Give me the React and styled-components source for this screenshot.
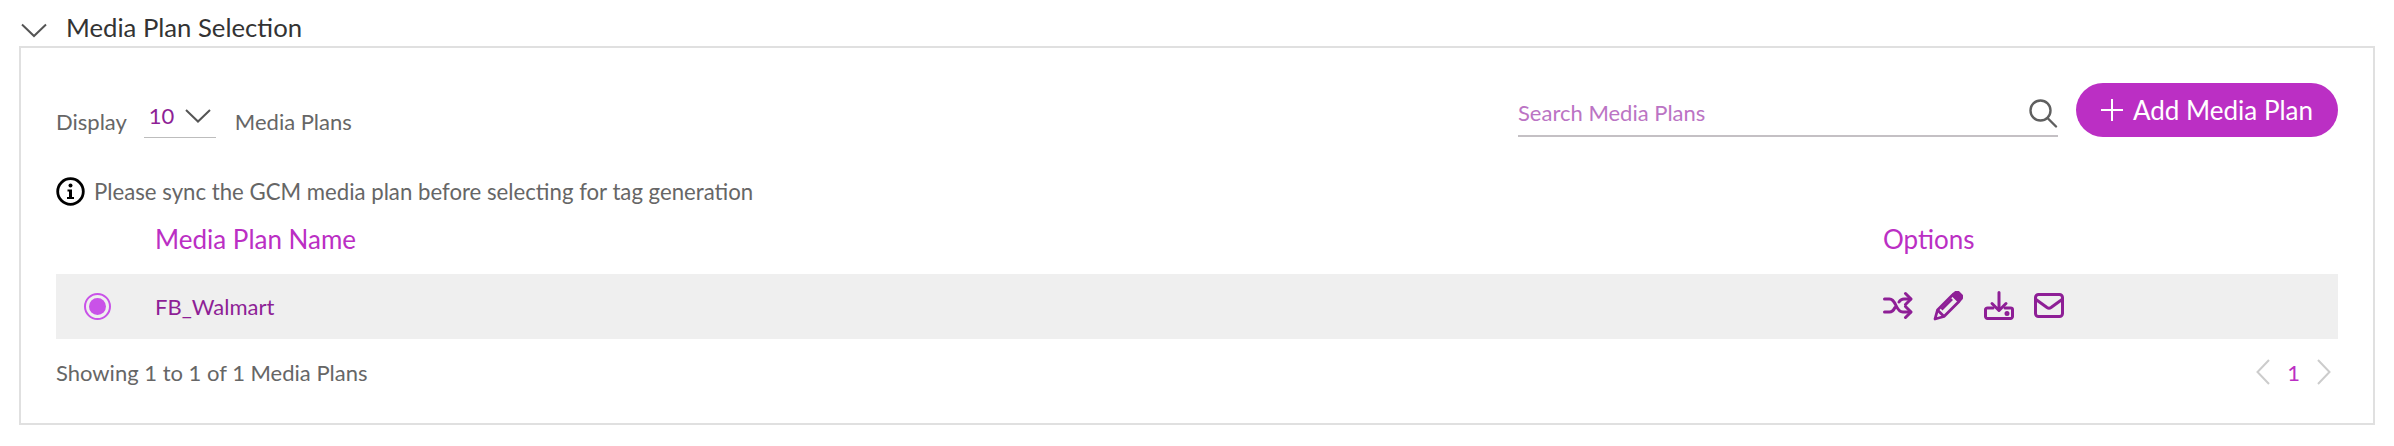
import React from "react";
import styled, { createGlobalStyle } from "styled-components";

const Global = createGlobalStyle`
  html, body { margin: 0; padding: 0; background: #fff; }
  body { font-family: "Lato", "Liberation Sans", sans-serif; color: #666; }
`;
const Page = styled.div`
  width: 2394px;
  height: 446px;
  padding: 10px 19px 0 19px;
  box-sizing: border-box;
  overflow: hidden;
`;
const SectionHeader = styled.div`
  display: flex;
  align-items: center;
  height: 36px;
  padding-bottom: 2px;
  box-sizing: border-box;
`;
const SectionChevron = styled.svg`
  width: 26px;
  height: 15px;
  margin: 6px 19px 0 2px;
`;
const SectionTitle = styled.h2`
  margin: 0;
  font-size: 25.700px;
  font-weight: 400;
  color: #333;
`;
const Panel = styled.section`
  height: 379px;
  box-sizing: border-box;
  border: 2px solid #e0e0e0;
  padding: 35px 35px 0;
`;
const Toolbar = styled.div`
  display: flex;
  align-items: flex-start;
  justify-content: space-between;
  height: 93px;
`;
const DisplayGroup = styled.div`
  display: flex;
  align-items: center;
  font-size: 22px;
  padding-top: 20px;
`;
const DisplayLabel = styled.span`
  line-height: 28px;
  padding-top: 3px;
`;
const Select = styled.div`
  display: flex;
  align-items: center;
  justify-content: space-between;
  box-sizing: border-box;
  width: 72px;
  height: 38px;
  margin: -3px 19px 0 17px;
  padding: 0 5px 6px;
  border-bottom: 1px solid #bdbdbd;
  color: #8e1f96;
  font-size: 22px;
`;
const SelectChevron = styled.svg`
  width: 26px;
  height: 14px;
`;
const ToolbarRight = styled.div`
  display: flex;
  align-items: flex-start;
  gap: 18px;
`;
const Search = styled.div`
  display: flex;
  align-items: center;
  justify-content: space-between;
  box-sizing: border-box;
  width: 540px;
  height: 54px;
  border-bottom: 2px solid #c4c0c4;
  color: #bb74c4;
  font-size: 22px;
  padding-top: 6px;
`;
const SearchIcon = styled.svg`
  width: 30px;
  height: 30px;
  margin-top: 2px;
`;
const AddButton = styled.button`
  display: flex;
  align-items: center;
  justify-content: center;
  gap: 10px;
  width: 262px;
  height: 54px;
  border: 0;
  border-radius: 27px;
  background: #bb2fc4;
  color: #fff;
  font: 400 26px "Lato", "Liberation Sans", sans-serif;
`;
const PlusIcon = styled.svg`
  width: 22px;
  height: 22px;
`;
const Notice = styled.div`
  display: flex;
  align-items: center;
  gap: 9px;
  height: 30px;
  font-size: 22.200px;
`;
const InfoIcon = styled.svg`
  width: 29px;
  height: 29px;
`;
const TableRowGrid = styled.div`
  display: grid;
  grid-template-columns: 99px 1728px 1fr;
  align-items: center;
`;
const HeadRow = styled(TableRowGrid)`
  height: 68px;
  padding-bottom: 2px;
  box-sizing: border-box;
  font-size: 26px;
  color: #bb2fc4;
`;
const DataRow = styled(TableRowGrid)`
  height: 65px;
  background: #efefef;
  font-size: 22px;
  color: #8e1f96;
`;
const Radio = styled.span`
  display: block;
  width: 27px;
  height: 27px;
  margin-left: 28px;
  box-sizing: border-box;
  border: 2px solid #c952e8;
  border-radius: 50%;
  padding: 3px;
  &::after {
    content: "";
    display: block;
    width: 100%;
    height: 100%;
    border-radius: 50%;
    background: #c952e8;
  }
`;
const Options = styled.div`
  display: flex;
  align-items: center;
  gap: 20.400px;
  padding-bottom: 2px;
`;
const OptionIcon = styled.svg`
  width: 30px;
  height: 30px;
  color: #8e1f96;
`;
const Footer = styled.div`
  display: flex;
  align-items: center;
  justify-content: space-between;
  height: 66px;
  font-size: 22px;
`;
const Pager = styled.div`
  display: flex;
  align-items: center;
  margin-right: 7px;
  gap: 17px;
  color: #bb2fc4;
`;
const PagerArrow = styled.svg`
  width: 14px;
  height: 26px;
`;

const Shuffle = () => (
  <OptionIcon viewBox="0 0 30 30" fill="none" stroke="currentColor" strokeWidth="3" strokeLinecap="round" strokeLinejoin="round">
    <path d="M1.500 8h5c3 0 4.500 2 6.500 6.500s3.500 6.500 7 6.500h7.500" />
    <path d="M1.500 21h5c3 0 4.300-2 5.500-4.500M16 11c1.300-2 2.500-3 5-3h6.500" />
    <path d="M22.500 2.500l5.500 5.500-5.500 5.500M22.500 15.500l5.500 5.500-5.500 5.500" />
  </OptionIcon>
);
const Pencil = () => (
  <OptionIcon viewBox="0 0 30 30" fill="none" stroke="currentColor" strokeWidth="2.800" strokeLinejoin="round">
    <path d="M2 28l2.500-9L19.500 4l6.500 6.500-15 15z" />
    <path d="M4.500 19l6.500 6.500M8.500 18.500L19 8" />
    <path fill="currentColor" d="M20.500 3l2-1.500c1-.7 2.200-.7 3.200.2l2.500 2.500c1 1 1 2.200.2 3.300L26.500 9.500z" />
  </OptionIcon>
);
const Download = () => (
  <OptionIcon viewBox="0 0 30 30" fill="none" stroke="currentColor" strokeWidth="3" strokeLinecap="round" strokeLinejoin="round">
    <path d="M15 1.500v18M8 12.500l7 7 7-7" />
    <path d="M9 17H3.500C2.500 17 1.500 17.800 1.500 18.500v7c0 1 1 2 2 2h23c1 0 2-1 2-2v-7c0-1-1-1.500-2-1.500H21" />
    <circle cx="23" cy="22.500" r="1" fill="currentColor" />
  </OptionIcon>
);
const Mail = () => (
  <OptionIcon viewBox="0 0 30 30" fill="none" stroke="currentColor" strokeWidth="3" strokeLinecap="round" strokeLinejoin="round">
    <rect x="1.500" y="3.500" width="27" height="22" rx="3" />
    <path d="M2 8.500l11 8c1.200.8 2.800.8 4 0l11-8" />
  </OptionIcon>
);

export default function App() {
  return (
    <Page>
      <Global />
      <SectionHeader>
        <SectionChevron viewBox="0 0 26 15" fill="none" stroke="#555" strokeWidth="2">
          <path d="M1 1.500l12 11.500L25 1.500" />
        </SectionChevron>
        <SectionTitle>Media Plan Selection</SectionTitle>
      </SectionHeader>
      <Panel>
        <Toolbar>
          <DisplayGroup>
            <DisplayLabel>Display</DisplayLabel>
            <Select>
              10
              <SelectChevron viewBox="0 0 26 14" fill="none" stroke="#555" strokeWidth="2">
                <path d="M1 1l12 11.500L25 1" />
              </SelectChevron>
            </Select>
            <DisplayLabel>Media Plans</DisplayLabel>
          </DisplayGroup>
          <ToolbarRight>
            <Search>
              Search Media Plans
              <SearchIcon viewBox="0 0 30 30" fill="none" stroke="#5f5f5f" strokeWidth="2.400" strokeLinecap="round">
                <circle cx="12.500" cy="12.500" r="10" />
                <path d="M20 20.500l8 8" />
              </SearchIcon>
            </Search>
            <AddButton>
              <PlusIcon viewBox="0 0 22 22" stroke="#fff" strokeWidth="2">
                <path d="M11 0v22M0 11h22" />
              </PlusIcon>
              Add Media Plan
            </AddButton>
          </ToolbarRight>
        </Toolbar>
        <Notice>
          <InfoIcon viewBox="0 0 29 29" fill="none">
            <circle cx="14.500" cy="14.500" r="12.800" stroke="#000" strokeWidth="2.800" />
            <circle cx="14.500" cy="8.500" r="2" fill="#000" />
            <path d="M11.500 12.500h4.500v7.500h2v2h-7v-2h2v-5.500h-1.500z" fill="#000" />
          </InfoIcon>
          Please sync the GCM media plan before selecting for tag generation
        </Notice>
        <HeadRow>
          <span />
          <span>Media Plan Name</span>
          <span>Options</span>
        </HeadRow>
        <DataRow>
          <Radio />
          <span>FB_Walmart</span>
          <Options>
            <Shuffle />
            <Pencil />
            <Download />
            <Mail />
          </Options>
        </DataRow>
        <Footer>
          <span>Showing 1 to 1 of 1 Media Plans</span>
          <Pager>
            <PagerArrow viewBox="0 0 14 26" fill="none" stroke="#ccc" strokeWidth="2">
              <path d="M13 1L1.500 13 13 25" />
            </PagerArrow>
            1
            <PagerArrow viewBox="0 0 14 26" fill="none" stroke="#ccc" strokeWidth="2">
              <path d="M1 1l11.500 12L1 25" />
            </PagerArrow>
          </Pager>
        </Footer>
      </Panel>
    </Page>
  );
}
